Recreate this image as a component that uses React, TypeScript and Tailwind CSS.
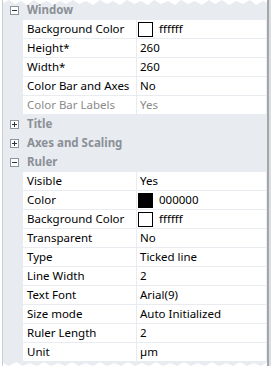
import React from "react";

type Row = { label: string; value: string; swatch?: string; disabled?: boolean };

const windowRows: Row[] = [
  { label: "Background Color", value: "ffffff", swatch: "#ffffff" },
  { label: "Height*", value: "260" },
  { label: "Width*", value: "260" },
  { label: "Color Bar and Axes", value: "No" },
  { label: "Color Bar Labels", value: "Yes", disabled: true },
];

const rulerRows: Row[] = [
  { label: "Visible", value: "Yes" },
  { label: "Color", value: "000000", swatch: "#000000" },
  { label: "Background Color", value: "ffffff", swatch: "#ffffff" },
  { label: "Transparent", value: "No" },
  { label: "Type", value: "Ticked line" },
  { label: "Line Width", value: "2" },
  { label: "Text Font", value: "Arial(9)" },
  { label: "Size mode", value: "Auto Initialized" },
  { label: "Ruler Length", value: "2" },
  { label: "Unit", value: "µm" },
];

function Toggle({ open }: { open: boolean }) {
  return (
    <svg width="9" height="9" viewBox="0 0 9 9" className="block">
      <rect x="0.5" y="0.5" width="8" height="8" fill="#fff" stroke="#8f959c" />
      <line x1="2" y1="4.5" x2="7" y2="4.5" stroke="#30343a" />
      {!open && <line x1="4.5" y1="2" x2="4.5" y2="7" stroke="#30343a" />}
    </svg>
  );
}

function Header({ title, open }: { title: string; open: boolean }) {
  return (
    <div className="h-[18px] flex items-center">
      <div className="w-[7px]" />
      <Toggle open={open} />
      <span className="ml-[8px] font-bold text-[#8b9097]">{title}</span>
    </div>
  );
}

function PropRow({ r }: { r: Row }) {
  const color = r.disabled ? "text-[#8a8a8a]" : "text-[#000000]";
  return (
    <div className="h-[18px] flex">
      <div className="w-[20px] shrink-0" />
      <div className={`w-[113px] shrink-0 bg-white flex items-center pl-[4px] ${color}`}>{r.label}</div>
      <div className="w-px shrink-0" />
      <div className={`w-[129px] shrink-0 bg-white flex items-center ${color}`}>
        {r.swatch ? (
          <>
            <div className="ml-[1px] w-[15px] h-[15px] border border-black" style={{ background: r.swatch }} />
            <span className="ml-[6px]">{r.value}</span>
          </>
        ) : (
          <span className="ml-[3px]">{r.value}</span>
        )}
      </div>
    </div>
  );
}

function TornTop() {
  const pts = [
    [0, 3], [6, 0], [12, 4], [18, 1], [24, 5], [31, 0], [37, 4], [44, 1], [50, 5], [57, 1], [63, 4],
    [70, 0], [76, 4], [83, 1], [90, 5], [97, 0], [104, 4], [110, 1], [117, 5], [124, 0], [131, 4],
    [138, 1], [145, 5], [151, 0], [158, 4], [165, 1], [172, 5], [178, 0], [185, 4], [192, 1], [199, 5],
    [206, 0], [212, 4], [219, 0], [226, 5], [233, 1], [240, 4], [247, 0], [253, 5], [260, 1], [264, 3],
  ];
  const d = "M0,0 " + pts.map((p) => `L${p[0]},${p[1]}`).join(" ") + " L264,0 Z";
  return (
    <svg width="264" height="6" className="absolute left-0 top-0" viewBox="0 0 264 6">
      <path d={d} fill="#ffffff" />
    </svg>
  );
}

function TornBottom() {
  const pts = [
    [0, 3], [6, 6], [13, 2], [20, 6], [27, 3], [34, 6], [41, 2], [48, 6], [55, 3], [62, 6], [69, 2],
    [76, 6], [83, 3], [90, 6], [97, 2], [104, 6], [111, 3], [118, 6], [125, 2], [132, 6], [139, 3],
    [146, 6], [153, 2], [160, 6], [167, 3], [174, 6], [181, 2], [188, 6], [195, 3], [202, 6], [209, 2],
    [216, 6], [223, 3], [230, 6], [237, 2], [244, 6], [251, 3], [258, 6], [264, 2],
  ];
  const d = "M0,6 " + pts.map((p) => `L${p[0]},${p[1]}`).join(" ") + " L264,6 Z";
  return (
    <svg width="264" height="6" className="absolute left-0 bottom-0" viewBox="0 0 264 6">
      <path d={d} fill="#ffffff" />
    </svg>
  );
}

export default function App() {
  return (
    <div
      className="w-[271px] h-[366px] bg-white flex overflow-hidden text-[11.5px] leading-none"
      style={{ fontFamily: "'Noto Sans', sans-serif" }}
    >
      <div className="w-[2px] shrink-0 bg-white" />
      <div className="w-px shrink-0 bg-[#c9ccd1]" />
      <div className="w-[264px] shrink-0 bg-[#e8ebef] relative flex flex-col gap-px pt-px">
        <Header title="Window" open />
        {windowRows.map((r) => (
          <PropRow key={r.label} r={r} />
        ))}
        <Header title="Title" open={false} />
        <Header title="Axes and Scaling" open={false} />
        <Header title="Ruler" open />
        {rulerRows.map((r, i) => (
          <PropRow key={i} r={r} />
        ))}
        <TornTop />
        <TornBottom />
      </div>
      <div className="w-[2px] shrink-0 bg-[#a3a6ab]" />
      <div className="w-[2px] shrink-0 bg-[#dcdee2]" />
    </div>
  );
}
